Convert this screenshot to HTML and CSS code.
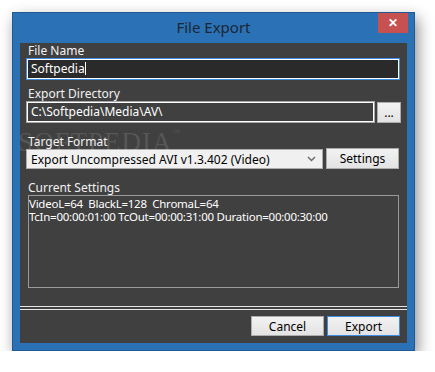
FILE: index.html
```html
<!DOCTYPE html>
<html lang="en">
<head>
<meta charset="UTF-8">
<title>File Export</title>
<link rel="stylesheet" href="styles.css">
</head>
<body>
  <div class="window">
    <div class="titlebar">
      <span class="title">File Export</span>
      <button class="close">&#x2715;</button>
    </div>

    <div class="client">
      <div class="watermark">SOFTPEDIA<sup>™</sup><span class="wm-url">www.softpedia.com</span></div>

      <label class="label">File Name</label>
      <div class="field field-focus">Softpedia<span class="caret"></span></div>

      <label class="label">Export Directory</label>
      <div class="row">
        <div class="field field-dir">C:\Softpedia\Media\AV\</div>
        <button class="btn btn-browse">...</button>
      </div>

      <label class="label">Target Format</label>
      <div class="row row-format">
        <div class="select">
          <span>Export Uncompressed AVI v1.3.402 (Video)</span>
          <svg class="chevron" width="9" height="6" viewBox="0 0 9 6"><path d="M1 1 L4.5 4.5 L8 1" fill="none" stroke="#666" stroke-width="1.4"/></svg>
        </div>
        <button class="btn btn-settings">Settings</button>
      </div>

      <label class="label">Current Settings</label>
      <div class="settings-box">
        <div>VideoL=64&nbsp; BlackL=128&nbsp; ChromaL=64</div>
        <div>TcIn=00:00:01:00 TcOut=00:00:31:00 Duration=00:00:30:00</div>
      </div>

      <div class="separator"></div>

      <div class="actions">
        <button class="btn">Cancel</button>
        <button class="btn btn-default">Export</button>
      </div>
    </div>
  </div>
</body>
</html>
```

FILE: styles.css
```css
body {
  margin: 0;
  padding: 12px 0 0 12px;
  background: #fff;
  font-family: "Noto Sans", "Open Sans", Arial, sans-serif;
  font-size: 12px;
}

/* ウィンドウ枠 */
.window {
  width: 403px;
  height: 339px;
  box-sizing: border-box;
  background: #2b71b5;
  border: 1px solid #1f5a94;
  padding: 0 7px 7px 7px;
  display: flex;
  flex-direction: column;
  box-shadow: 3px 6px 14px rgba(0, 0, 0, 0.45);
}
.titlebar {
  height: 30px;
  flex: none;
  display: flex;
  align-items: center;
  justify-content: center;
  position: relative;
}
.title {
  font-size: 15px;
  color: #1c2733;
  margin-top: -2px;
}
.close {
  position: absolute;
  top: 0;
  right: -1px;
  width: 30px;
  height: 20px;
  border: none;
  background: #c75050;
  color: #fff;
  font-size: 12px;
  font-weight: bold;
  padding: 0;
  line-height: 20px;
}

/* 本体 */
.client {
  flex: 1;
  background: #404040;
  color: #f2f2f2;
  padding: 0 6px 0 6px;
  display: flex;
  flex-direction: column;
  position: relative;
}
.label {
  display: block;
  height: 15px;
  line-height: 15px;
  padding-left: 2px;
}
.label:nth-of-type(2) { margin-top: 6px; }

.field {
  height: 22px;
  box-sizing: border-box;
  line-height: 20px;
  padding-left: 4px;
  color: #fff;
}
.field-focus {
  width: 374px;
  background: #2a2a2a;
  border: 1px solid #3d8ee2;
  box-shadow: inset 0 0 0 1px #fff;
}
.caret {
  display: inline-block;
  width: 1px;
  height: 13px;
  background: #fff;
  vertical-align: -2px;
}
.field-dir {
  width: 349px;
  background: #404040;
  border: 1px solid #a8a8a8;
  box-shadow: inset 0 0 0 1px #fff;
}

.row {
  display: flex;
  align-items: flex-start;
  gap: 2px;
}
.row + .label { margin-top: 11px; }
.row-format { gap: 3px; }

.btn {
  font-family: inherit;
  font-size: 12px;
  color: #000;
  background: linear-gradient(#f2f2f2, #e3e3e3);
  border: 1px solid #acacac;
  padding: 0;
  height: 21px;
  box-sizing: border-box;
}
.btn-browse {
  width: 24px;
  margin-top: 1px;
  line-height: 12px;
}
.btn-settings {
  width: 73px;
  height: 21px;
  margin-top: -1px;
}

.select {
  width: 297px;
  height: 20px;
  box-sizing: border-box;
  background: #f0f0f0;
  border: 1px solid #acacac;
  color: #000;
  display: flex;
  align-items: center;
  justify-content: space-between;
  padding: 0 6px 0 4px;
}

.settings-box {
  margin-left: 2px;
  width: 371px;
  height: 93px;
  box-sizing: border-box;
  border: 1px solid #9a9a9a;
  padding: 1px 0 0 0;
  line-height: 13px;
  color: #fff;
  font-size: 11.5px;
  letter-spacing: -0.25px;
}

.separator {
  margin: 18px -6px 0 -6px;
  height: 2px;
  border-top: 1px solid #e6e6e6;
  border-bottom: 1px solid #e6e6e6;
}

.actions {
  display: flex;
  justify-content: flex-end;
  gap: 3px;
  margin-top: 6px;
  padding-right: 1px;
}
.actions .btn {
  width: 73px;
  height: 20px;
}
.btn-default {
  border-color: #3d8ee2;
}

/* 透かし */
.watermark {
  position: absolute;
  left: -2px;
  top: 84px;
  font-family: "Liberation Serif", serif;
  font-size: 27px;
  letter-spacing: 1px;
  color: rgba(255, 255, 255, 0.12);
  pointer-events: none;
}
.watermark sup {
  font-size: 8px;
  vertical-align: 16px;
}
.wm-url {
  position: absolute;
  left: 70px;
  top: 28px;
  font-family: "Liberation Sans", sans-serif;
  font-size: 9px;
  letter-spacing: 0;
  color: rgba(255, 255, 255, 0.1);
}
```
